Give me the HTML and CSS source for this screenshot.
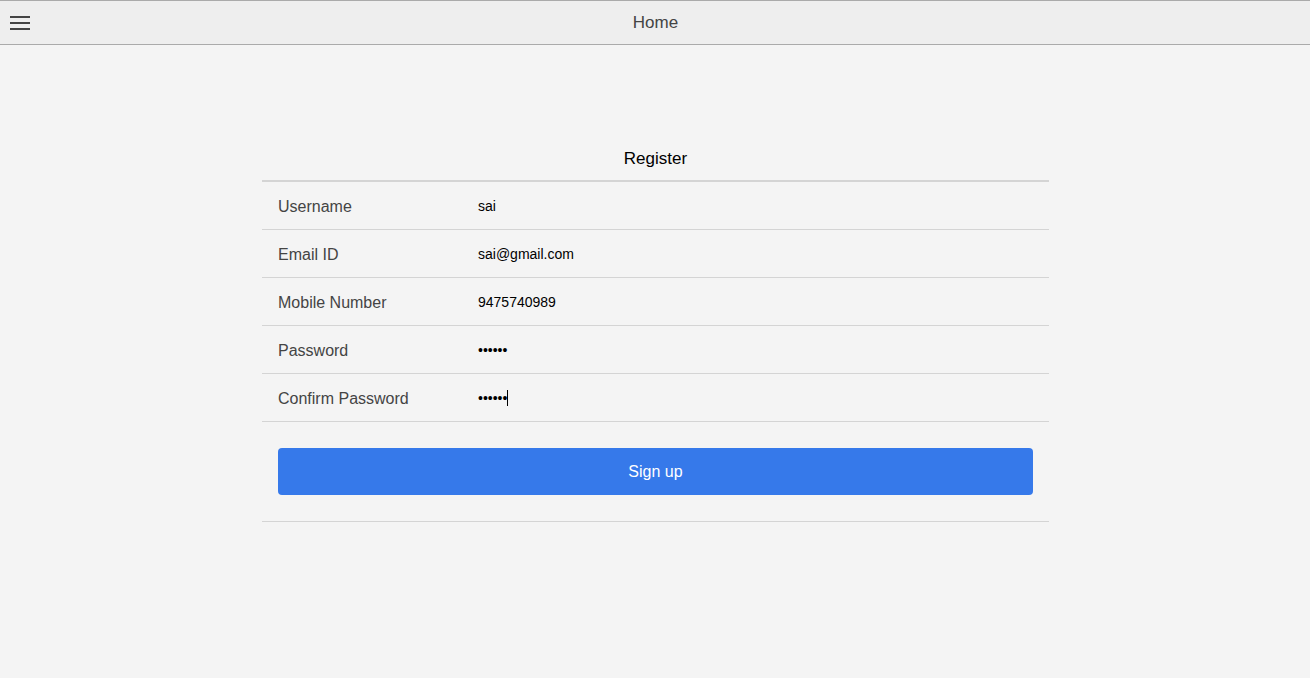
FILE: index.html
```html
<!DOCTYPE html>
<html>
<head>
<meta charset="utf-8">
<link rel="stylesheet" href="styles.css">
</head>
<body>
<header class="topbar">
  <button class="menu" aria-label="menu">
    <svg width="20" height="14" viewBox="0 0 20 14"><rect x="0" y="0" width="20" height="2" fill="#444"/><rect x="0" y="6" width="20" height="2" fill="#444"/><rect x="0" y="12" width="20" height="2" fill="#444"/></svg>
  </button>
  <div class="title">Home</div>
</header>
<main class="content">
  <section class="card">
    <div class="card-title">Register</div>
    <div class="row"><span class="label">Username</span><span class="value">sai</span></div>
    <div class="row"><span class="label">Email ID</span><span class="value">sai@gmail.com</span></div>
    <div class="row"><span class="label">Mobile Number</span><span class="value">9475740989</span></div>
    <div class="row"><span class="label">Password</span><span class="value dots">••••••</span></div>
    <div class="row"><span class="label">Confirm Password</span><span class="value dots">••••••<span class="caret"></span></span></div>
    <div class="actions"><button class="signup">Sign up</button></div>
  </section>
</main>
</body>
</html>
```
FILE: styles.css
```css
html, body {
  margin: 0;
  padding: 0;
  background: #f4f4f4;
  font-family: "Liberation Sans", Arial, sans-serif;
}
.topbar {
  position: relative;
  height: 43px;
  background: #eeeeee;
  border-top: 1px solid #aaaaaa;
  border-bottom: 1px solid #aaaaaa;
  display: flex;
  align-items: center;
  justify-content: center;
}
.menu {
  position: absolute;
  left: 10px;
  top: 15px;
  padding: 0;
  margin: 0;
  border: 0;
  background: none;
  width: 20px;
  height: 14px;
  display: block;
}
.menu svg { display: block; }
.title {
  font-size: 17px;
  color: #444;
  padding-left: 1px;
}
.content {
  padding-top: 92px;
  display: flex;
  justify-content: center;
}
.card {
  width: 787px;
  margin-left: 1px;
}
.card-title {
  text-align: center;
  font-size: 17px;
  color: #000;
  height: 45px;
  line-height: 44px;
  border-bottom: 2px solid #d4d4d4;
  box-sizing: border-box;
}
.row {
  display: flex;
  align-items: center;
  height: 47px;
  border-bottom: 1px solid #d4d4d4;
}
.label {
  width: 200px;
  padding-left: 16px;
  padding-top: 2px;
  font-size: 16px;
  color: #444;
  flex: none;
}
.value {
  font-size: 14px;
  color: #000;
  display: flex;
  align-items: center;
}
.dots { font-size: 14px; }
.caret {
  display: inline-block;
  width: 1px;
  height: 16px;
  background: #000;
}
.actions {
  padding: 26px 16px 26px 16px;
  border-bottom: 1px solid #d4d4d4;
}
.signup {
  display: block;
  width: 100%;
  height: 47px;
  border: 0;
  border-radius: 4px;
  background: #3679ea;
  color: #fff;
  font-family: "Liberation Sans", Arial, sans-serif;
  font-size: 16px;
}
```
